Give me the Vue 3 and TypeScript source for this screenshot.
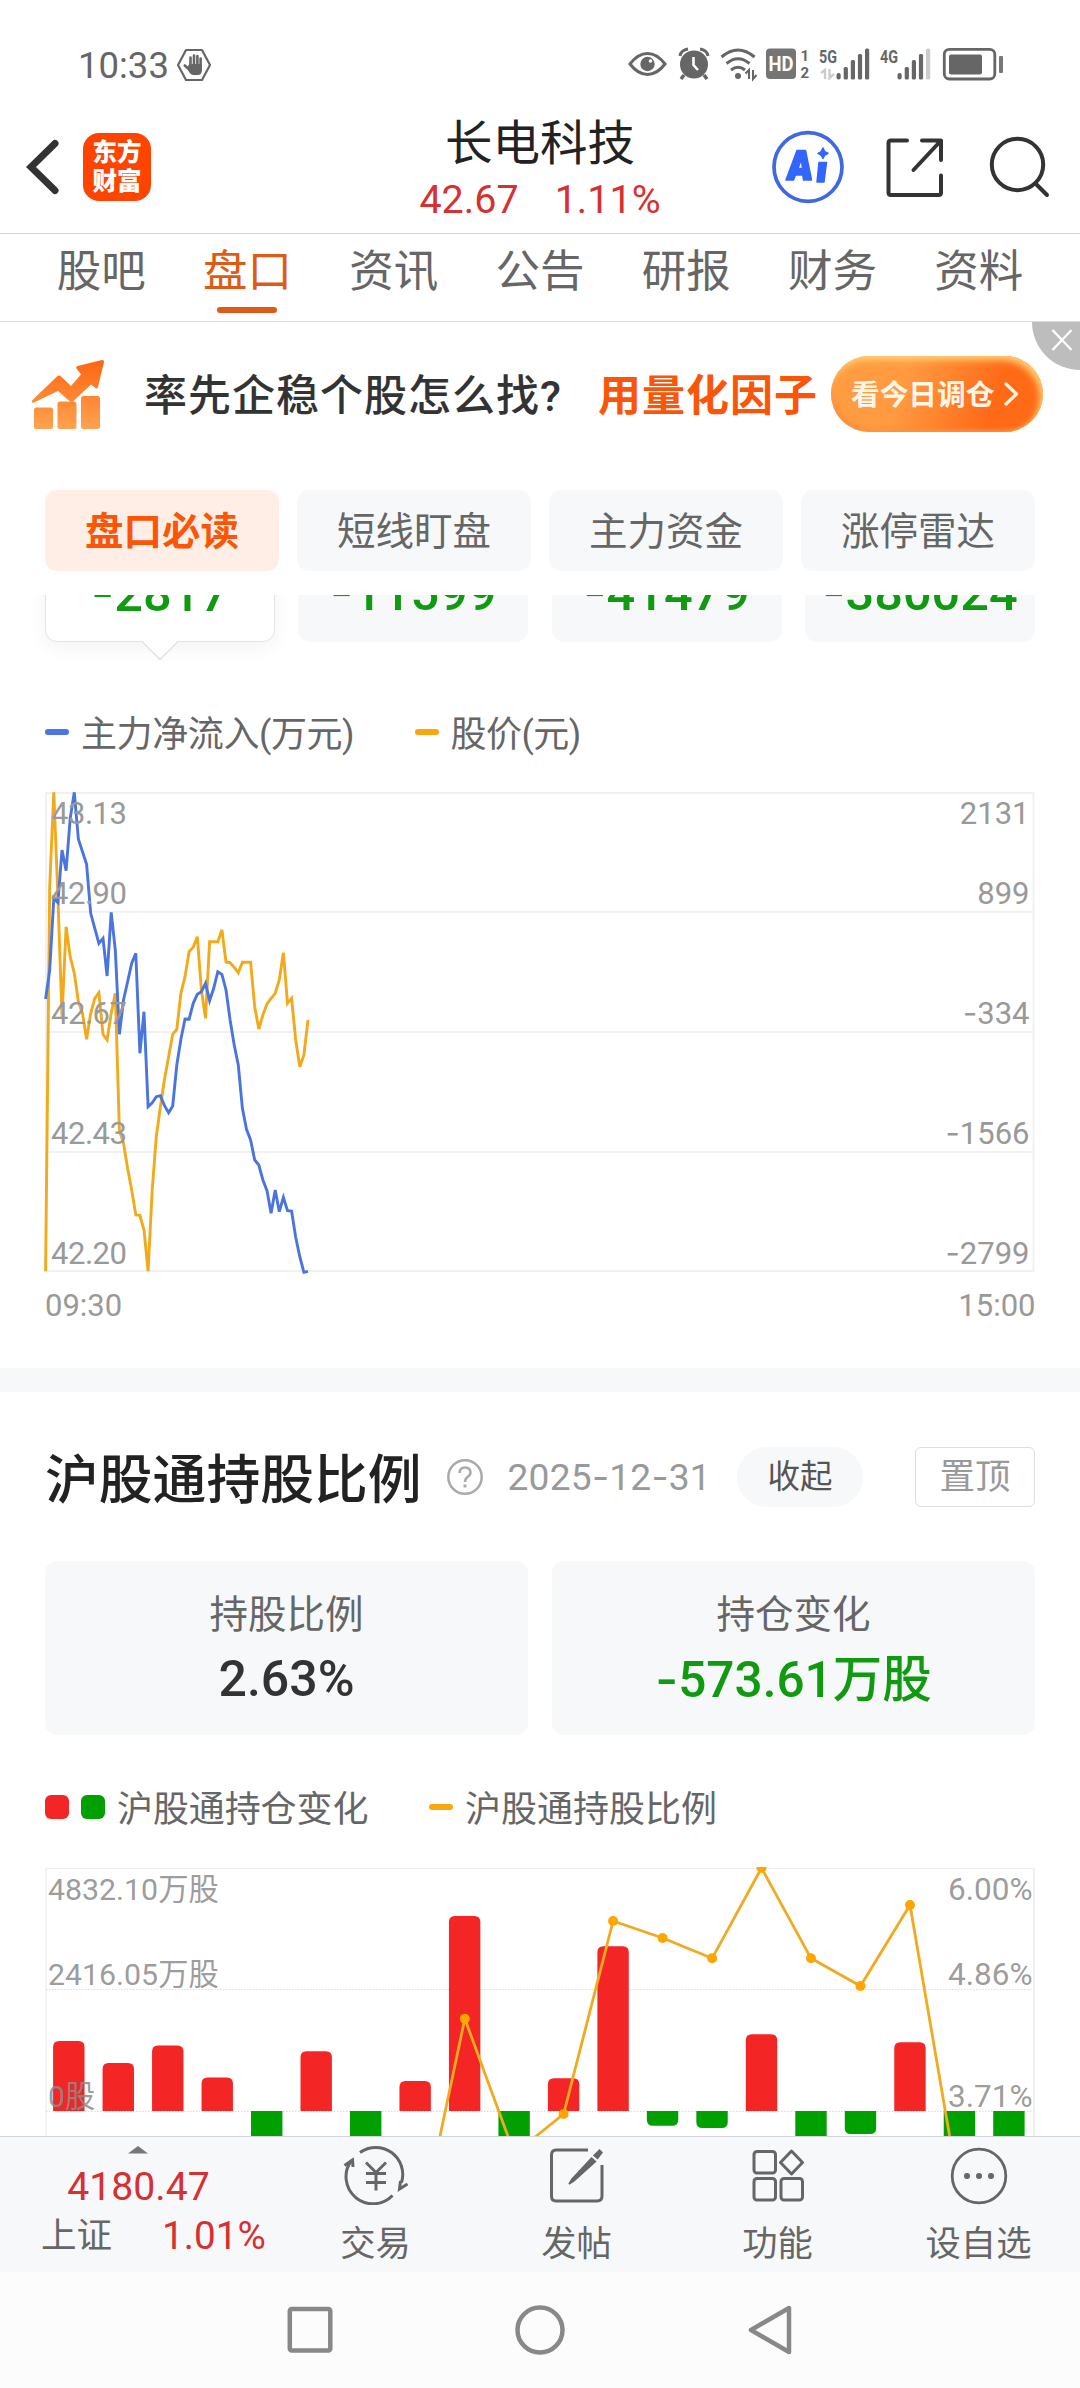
<script setup lang="ts">
interface NavItem {
  label: string
  icon: 'trade' | 'post' | 'apps' | 'more'
}

const tabs: string[] = ['股吧', '盘口', '资讯', '公告', '研报', '财务', '资料']
const activeTab = '盘口'

const chips: string[] = ['盘口必读', '短线盯盘', '主力资金', '涨停雷达']
const activeChip = '盘口必读'

const flows: string[] = ['2817', '11599', '41479', '380024']

const navItems: NavItem[] = [
  { label: '交易', icon: 'trade' },
  { label: '发帖', icon: 'post' },
  { label: '功能', icon: 'apps' },
  { label: '设自选', icon: 'more' },
]

// Minute samples since 09:30, in thirds of a pixel below the chart origin.
const inflow: number[] = [
  957, 870, 655, 668, 510, 572, 415, 337, 478, 515, 553, 700, 745, 790, 775, 888,
  697, 810, 1063, 960, 905, 850, 820, 1120, 995, 1280, 1268, 1250, 1247, 1277, 1298,
  1278, 1155, 1078, 1017, 1018, 970, 943, 935, 910, 962, 925, 875, 883, 930, 1020,
  1095, 1155, 1285, 1348, 1380, 1440, 1455, 1500, 1532, 1600, 1530, 1595, 1552, 1592,
  1593, 1672, 1730, 1777, 1774,
]
const price: number[] = [
  1774, 620, 337, 650, 1010, 740, 830, 880, 965, 1000, 1078, 1000, 955, 938, 1063,
  1080, 1000, 940, 1350, 1390, 1465, 1530, 1605, 1606, 1650, 1774, 1530, 1370, 1280,
  1198, 1130, 1063, 1048, 940, 890, 815, 802, 770, 930, 1015, 785, 785, 785, 750, 846,
  848, 862, 878, 847, 847, 847, 980, 1047, 1005, 972, 955, 940, 900, 818, 970, 955,
  1080, 1160, 1125, 1020,
]

function trace(samples: number[]): string {
  return samples
    .map((v, i) => `${(45.6 + i * 4.1).toFixed(1)},${(680 + v / 3).toFixed(1)}`)
    .join(' ')
}

const minuteLabels = [
  { y: 824, left: '43.13', neg: false, right: '2131' },
  { y: 904, left: '42.90', neg: false, right: '899' },
  { y: 1024, left: '42.67', neg: true, right: '334' },
  { y: 1144, left: '42.43', neg: true, right: '1566' },
  { y: 1264, left: '42.20', neg: true, right: '2799' },
]

// Bar end positions; values above the zero line are increases.
const zeroY = 2111
const ends: number[] = [
  2041, 2063, 2045.5, 2077.5, 2170, 2051.3, 2170, 2081, 1916, 2170,
  2078.3, 1946.3, 2125.7, 2128, 2034.3, 2170, 2134, 2042.3, 2170, 2170,
]

function barPath(end: number, i: number): string {
  const x = 53.1 + i * 49.48
  const w = 31.4
  const s = end < zeroY ? 1 : -1
  const r = 6
  return `M${x} ${zeroY}V${end + s * r}Q${x} ${end} ${x + r} ${end}H${x + w - r}Q${x + w} ${end} ${x + w} ${end + s * r}V${zeroY}Z`
}

const ratio: [number, number][] = [
  [415.3, 2253], [464.8, 2018.7], [514.4, 2153.8], [563.6, 2114], [613.1, 1921],
  [662.6, 1938], [712.1, 1958.3], [761.5, 1868], [811, 1958.3], [860.5, 1986],
  [910, 1905], [959.5, 2194],
]
const ratioPoints = ratio.map((p) => p.join(',')).join(' ')

const holdLabels = [
  { y: 1900, left: '4832.10万股', right: '6.00%' },
  { y: 1985, left: '2416.05万股', right: '4.86%' },
  { y: 2107, left: '0股', right: '3.71%' },
]
</script>

<template>
  <div class="screen">
    <div class="status">
      <span class="clock">10:33</span>
      <svg class="hand" width="36" height="34" viewBox="0 0 36 34" fill="none" stroke="#666">
        <path d="M10 2H26L34 17L26 32H10L2 17Z" stroke-width="2.2" stroke-linejoin="round" />
        <g stroke-width="2.6" stroke-linecap="round">
          <path d="M14.5 17V9.5M18 17V7.5M21.4 17V8M24.6 18V10.5M14 22L8.8 17.5" />
        </g>
        <path d="M13.2 16H26V22Q26 27 21.5 27H17.5Q14.5 27 12.5 23L11 20Z" fill="#666" stroke="none" />
      </svg>
      <svg class="status-icons" width="380" height="40" viewBox="625 44 380 40" fill="none" stroke="#666">
        <path d="M631 64Q639 53.500 648.500 53.500T666 64Q658 74.500 648.500 74.500T631 64Z" stroke-width="3" />
        <circle cx="648.500" cy="64" r="7.200" fill="#666" stroke="none" />
        <circle cx="651.500" cy="61" r="1.800" fill="#fff" stroke="none" />
        <circle cx="695" cy="64.500" r="14" fill="#666" stroke="none" />
        <path d="M681 56Q682 50 689 49M709 56Q708 50 701 49" stroke-width="3" />
        <path d="M685 75L682 79M705 75L708 79" stroke-width="3.500" />
        <path d="M694.500 57V65L699 70" stroke="#fff" stroke-width="2.600" />
        <path d="M722.500 57Q739 43 755.500 57M727.500 63.500Q739 54 750.500 63.500M732 70Q739 64.500 746 70" stroke-width="3" />
        <circle cx="739" cy="76" r="3" fill="#666" stroke="none" />
        <path d="M746.500 73.500L750 70V79M754 70V79L757.500 75" stroke-width="2" />
        <rect x="767" y="48.500" width="30" height="30.500" rx="4" fill="#757575" stroke="none" />
        <rect x="837.500" y="73" width="4.200" height="6.500" rx="2" fill="#666" stroke="none" />
        <rect x="844.700" y="67" width="4.200" height="12.500" rx="1.500" fill="#666" stroke="none" />
        <rect x="851.800" y="60" width="4.200" height="19.500" rx="1.500" fill="#666" stroke="none" />
        <rect x="858.900" y="54" width="4.200" height="25.500" rx="1.500" fill="#666" stroke="none" />
        <rect x="866" y="48.500" width="4.200" height="31" rx="1.500" fill="#666" stroke="none" />
        <path d="M822 73L826 70V79M830.500 69V78L835 74" stroke="#ccc" stroke-width="2.400" />
        <rect x="898.500" y="73" width="4.200" height="6.500" rx="2" fill="#666" stroke="none" />
        <rect x="905.700" y="67" width="4.200" height="12.500" rx="1.500" fill="#666" stroke="none" />
        <rect x="912.800" y="60" width="4.200" height="19.500" rx="1.500" fill="#666" stroke="none" />
        <rect x="919.900" y="54" width="4.200" height="25.500" rx="1.500" fill="#666" stroke="none" />
        <rect x="927" y="48.500" width="4.200" height="31" rx="1.500" fill="#ccc" stroke="none" />
        <rect x="945.300" y="49.300" width="50.500" height="29.700" rx="5" stroke-width="2.800" />
        <rect x="950" y="54.500" width="33" height="20" rx="2" fill="#666" stroke="none" />
        <rect x="1000" y="56" width="4" height="17" rx="1" fill="#777" stroke="none" />
        <g stroke="none" fill="#666" font-family="Roboto, sans-serif" font-weight="700">
          <text x="769.500" y="71" font-size="20" textLength="25" lengthAdjust="spacingAndGlyphs" style="fill: #fff">HD</text>
          <text x="801.500" y="61" font-size="15">1</text>
          <text x="801.500" y="78" font-size="15">2</text>
          <text x="820" y="62.500" font-size="18.500" textLength="18" lengthAdjust="spacingAndGlyphs">5G</text>
          <text x="881" y="62.500" font-size="18.500" textLength="18" lengthAdjust="spacingAndGlyphs">4G</text>
        </g>
      </svg>
    </div>

    <header class="header">
      <div class="side">
        <svg class="back" width="36" height="58" viewBox="0 0 36 58" fill="none" stroke="#333" stroke-width="7" stroke-linecap="round" stroke-linejoin="miter">
          <path d="M30 5.500L6 29L30 52.500" />
        </svg>
        <div class="logo"><span>东方</span><span>财富</span></div>
      </div>
      <div class="center">
        <div class="stock">长电科技</div>
        <div class="quote"><span>42.67</span><span>1.11%</span></div>
      </div>
      <div class="side right">
        <svg width="72" height="74" viewBox="0 0 72 74">
          <ellipse cx="36" cy="37" rx="34" ry="34.300" fill="none" stroke="#4068e4" stroke-width="3.700" />
          <g fill="#3366ff" stroke="#3366ff" stroke-width="1.500" stroke-linejoin="round">
            <path fill-rule="evenodd" d="M25 20.500H33.500L39.500 50H31.500L30.700 45H23.500L21.500 50H14ZM29.300 29L26 38.500H30.500Z" />
            <path d="M47 32.500H54.500L52 52H45Z" />
            <path d="M51 18L52.800 21.800L56 23.300L52.800 25L51 28.500L49 25L46 23.300L49 21.800Z" />
          </g>
        </svg>
        <svg class="share" width="60" height="60" viewBox="0 0 60 60" fill="none" stroke="#333" stroke-width="4" stroke-linecap="round" stroke-linejoin="round">
          <path d="M22 3.500H6Q3.500 3.500 3.500 6V55.500Q3.500 58 6 58H53.500Q56 58 56 55.500V38.500M37 3.500H56V23M56 3.500L28.500 33" />
        </svg>
        <svg width="62" height="62" viewBox="0 0 62 62" fill="none" stroke="#333" stroke-width="4" stroke-linecap="round">
          <circle cx="28.500" cy="28.500" r="25.700" />
          <path d="M46.500 47.500L58 59" />
        </svg>
      </div>
    </header>

    <nav class="tabs">
      <div v-for="t in tabs" :key="t" class="tab" :class="{ on: t === activeTab }"><span>{{ t }}</span></div>
    </nav>

    <section class="banner">
      <svg class="growth" width="74" height="72" viewBox="0 0 74 72">
        <defs>
          <linearGradient id="growth-fill" x1="0" y1="0" x2="0" y2="1" gradientUnits="userSpaceOnUse" gradientTransform="scale(72)">
            <stop offset="0" stop-color="#ff6410" />
            <stop offset="1" stop-color="#ffa552" />
          </linearGradient>
        </defs>
        <g fill="url(#growth-fill)">
          <path d="M1.500 41L26 17.500Q28 15.500 30 17.500L40 27L50 15.500L45.500 9.500Q44.500 8 46.500 7L71 1Q73 .5 73 3L67 28Q66 31 64.500 29L60 25.500L42 42.500Q40.500 44 39 42.500L27 32L3 43.500Q-.5 44.500 1.500 41Z" />
          <rect x="3" y="48.500" width="19" height="21.500" rx="2.500" />
          <rect x="26.500" y="42.500" width="19" height="27.500" rx="2.500" />
          <rect x="50" y="37" width="19" height="33" rx="2.500" />
        </g>
      </svg>
      <span class="ask">率先企稳个股怎么找?</span>
      <span class="factor">用量化因子</span>
      <div class="cta">
        <span>看今日调仓</span>
        <svg width="16" height="26" viewBox="0 0 16 26" fill="none" stroke="#fff3e4" stroke-width="3.200" stroke-linecap="round" stroke-linejoin="round">
          <path d="M3 3L13.500 13L3 23" />
        </svg>
      </div>
      <div class="close">
        <svg width="22" height="22" viewBox="0 0 22 22" stroke="#fff" stroke-width="2.400">
          <path d="M1.500 1L20.500 21M20.500 1L1.500 21" />
        </svg>
      </div>
    </section>

    <div class="chips">
      <div v-for="c in chips" :key="c" class="chip" :class="{ on: c === activeChip }">{{ c }}</div>
    </div>

    <div class="flows">
      <div v-for="(f, i) in flows" :key="f" class="flow" :class="{ on: i === 0 }">
        <span><i>-</i>{{ f }}</span>
        <svg v-if="i === 0" class="pointer" width="40" height="22" viewBox="0 0 40 22">
          <path d="M1 0L20 19.500L39 0" fill="#fff" />
          <path d="M1.500 1L20 19.500L38.500 1" fill="none" stroke="#e2e2e2" stroke-width="1.300" />
        </svg>
      </div>
    </div>

    <div class="legend first">
      <b class="dash blue"></b><span class="inflow">主力净流入(万元)</span>
      <b class="dash amber"></b><span class="quoted">股价(元)</span>
    </div>

    <svg class="minute" width="1080" height="578" viewBox="0 790 1080 578">
      <g stroke="#f1f1f1" stroke-width="2" fill="none">
        <path d="M46 793H1034.500M46 911.700H1034.500M46 1032H1034.500M46 1152H1034.500M46 1271H1034.500M46 792V1272M1033.500 792V1272" />
      </g>
      <g fill="none" stroke-width="2.900" stroke-linejoin="miter">
        <polyline :points="trace(price)" stroke="#f2aa1c" />
        <polyline :points="trace(inflow)" stroke="#4a74e0" />
      </g>
      <g class="axis">
        <template v-for="l in minuteLabels" :key="l.y">
          <text x="51" :y="l.y" textLength="76">{{ l.left }}</text>
          <text x="1029.500" :y="l.y" text-anchor="end"><tspan v-if="l.neg" class="minus">-</tspan>{{ l.right }}</text>
        </template>
        <text x="45" y="1315.700">09:30</text>
        <text x="1035.500" y="1315.700" text-anchor="end">15:00</text>
      </g>
    </svg>

    <div class="band"></div>

    <div class="title-row">
      <h2>沪股通持股比例</h2>
      <svg class="help" width="38" height="38" viewBox="0 0 38 38" fill="none" stroke="#aaa" stroke-width="2.500">
        <circle cx="19" cy="19" r="16.700" />
        <path d="M13.500 15Q13.700 9.500 19 9.500T24.500 14.500Q24.500 17 21.500 19Q19 20.700 19 24" />
        <path d="M19 26.500V29.500" stroke-width="3" />
      </svg>
      <span class="date">2025<i>-</i>12<i>-</i>31</span>
      <span class="fold">收起</span>
      <span class="pin">置顶</span>
    </div>

    <div class="stats">
      <div class="stat"><span class="name">持股比例</span><span class="num">2.63%</span></div>
      <div class="stat"><span class="name">持仓变化</span><span class="num down"><i>-</i>573.61万股</span></div>
    </div>

    <div class="legend second">
      <b class="sq red"></b><b class="sq green"></b><span class="change">沪股通持仓变化</span>
      <b class="dash amber"></b><span>沪股通持股比例</span>
    </div>

    <svg class="hold" width="1080" height="269" viewBox="0 1867 1080 269">
      <g fill="none">
        <path d="M45.500 1868.500H1034.500M46 1868V2140" stroke="#eee" stroke-width="1.200" />
        <path d="M1034 1868V2140" stroke="#f0f0f0" stroke-width="2" />
        <path d="M46 1989.500H1034M46 2111.300H1034" stroke="#ddd" stroke-width="1.200" stroke-dasharray="1.500 1.500" />
      </g>
      <path v-for="(e, i) in ends" :key="i" :d="barPath(e, i)" :fill="e < zeroY ? '#f42525' : '#00a000'" />
      <polyline :points="ratioPoints" fill="none" stroke="#f0aa20" stroke-width="2.800" />
      <circle v-for="p in ratio" :key="p[0]" :cx="p[0]" :cy="p[1]" r="5" fill="#ffa500" />
      <g class="axis hold-axis">
        <template v-for="l in holdLabels" :key="l.y">
          <text x="48" :y="l.y">{{ l.left }}</text>
          <text class="percent" x="1032.500" :y="l.y" text-anchor="end">{{ l.right }}</text>
        </template>
      </g>
    </svg>

    <footer class="nav">
      <div class="index">
        <svg width="20" height="8" viewBox="0 0 20 8"><path d="M0 7.500L10 0L20 7.500Z" fill="#777" /></svg>
        <span class="point">4180.47</span>
        <div class="line"><span>上证</span><span class="pct">1.01%</span></div>
      </div>
      <div v-for="n in navItems" :key="n.label" class="item">
        <svg v-if="n.icon === 'trade'" width="66" height="60" viewBox="0 0 66 60" fill="none" stroke="#666" stroke-width="3">
          <path d="M17 7.500A27 27 0 0 1 58.500 37.500M49.500 50.500A27 27 0 0 1 8.500 15.500" />
          <path d="M1.500 20.500L9.500 15L10 22M64.500 39L56.500 44L57.500 36" />
          <path d="M23 17.500L33 27.500L43 17.500M33 27V45.500M23 28.500H43M23 37.500H43" />
        </svg>
        <svg v-else-if="n.icon === 'post'" width="66" height="60" viewBox="0 0 66 60" fill="none" stroke="#666" stroke-width="3">
          <path d="M44 5H12Q7.500 5 7.500 10V51Q7.500 56 12 56H53Q58 56 58 51V20" />
          <path d="M28 34L47.500 13L51.500 16.500L30 36L25 39ZM50 10.500L55.500 5L58 7.500L53.500 13.500Z" fill="#666" stroke-width="1.500" />
        </svg>
        <svg v-else-if="n.icon === 'apps'" width="66" height="60" viewBox="0 0 66 60" fill="none" stroke="#666" stroke-width="3" stroke-linejoin="round">
          <rect x="9" y="6.500" width="21.500" height="21.500" rx="3" />
          <path d="M46.500 6L57.500 17.500L46.500 29L35.500 17.500Z" />
          <rect x="9" y="33.500" width="21.500" height="21.500" rx="3" />
          <rect x="36" y="33.500" width="21.500" height="21.500" rx="3" />
        </svg>
        <svg v-else width="66" height="60" viewBox="0 0 66 60" fill="none" stroke="#666" stroke-width="2.800">
          <circle cx="33" cy="31" r="26.800" />
          <g fill="#666" stroke="none"><circle cx="21" cy="31" r="3" /><circle cx="33" cy="31" r="3" /><circle cx="45" cy="31" r="3" /></g>
        </svg>
        <span>{{ n.label }}</span>
      </div>
    </footer>

    <div class="system">
      <svg width="50" height="54" viewBox="0 0 50 54" fill="none" stroke="#888" stroke-width="4.500"><rect x="4.800" y="6" width="40.500" height="41.500" rx="2" /></svg>
      <svg width="54" height="54" viewBox="0 0 54 54" fill="none" stroke="#888" stroke-width="4.500"><circle cx="27" cy="27" r="22.500" /></svg>
      <svg width="50" height="54" viewBox="0 0 50 54" fill="none" stroke="#888" stroke-width="4.500" stroke-linejoin="round"><path d="M44 5V49L6 27Z" /></svg>
    </div>
  </div>
</template>

<style>
body {
  margin: 0;
  background: #fff;
}
</style>

<style scoped>
.screen {
  width: 1080px;
  height: 2388px;
  overflow: hidden;
  display: flex;
  flex-direction: column;
  background: #fff;
  color: #666;
  font-family: Roboto, 'Noto Sans CJK SC', sans-serif;
}
.screen > * {
  flex: none;
  box-sizing: border-box;
}
svg {
  display: block;
  flex: none;
}
i {
  font-style: normal;
  font-family: Inter, sans-serif;
}
.status {
  height: 100px;
  display: flex;
  align-items: center;
  padding: 31px 76px 0 78px;
}
.clock {
  font-size: 36.500px;
  line-height: 40px;
  width: 98px;
}
.hand {
  margin-top: -2px;
}
.status-icons {
  margin-left: auto;
  margin-top: -3px;
}
.header {
  height: 134px;
  border-bottom: 1.500px solid #d6d6d6;
  display: flex;
  justify-content: space-between;
  align-items: center;
}
.side {
  width: 330px;
  display: flex;
  align-items: center;
  padding-left: 25px;
  box-sizing: border-box;
}
.logo {
  margin-left: 22px;
  width: 68px;
  height: 68px;
  border-radius: 16px;
  background: #ff4400;
  color: #fff;
  display: flex;
  flex-direction: column;
  align-items: center;
  justify-content: center;
  font-size: 24.500px;
  font-weight: 900;
  line-height: 29px;
}
.center {
  text-align: center;
  padding-top: 10px;
}
.stock {
  font-size: 47.500px;
  line-height: 56px;
  color: #222;
}
.quote {
  display: flex;
  gap: 36px;
  font-size: 39.500px;
  line-height: 56px;
  color: #d63030;
}
.side.right {
  padding: 0 29px 0 0;
  justify-content: flex-end;
}
.side.right .share {
  margin: 0 44px 0 41px;
}
.tabs {
  height: 88px;
  padding: 0 28px;
  display: flex;
  border-bottom: 1.500px solid #d9d9d9;
}
.tab {
  flex: 1;
  display: flex;
  flex-direction: column;
  align-items: center;
  font-size: 44.500px;
  line-height: 76px;
}
.tab.on {
  color: #dd5b14;
}
.tab.on::after {
  content: '';
  width: 60px;
  height: 6px;
  border-radius: 3px;
  background: #dd5b14;
  margin-top: -3px;
}
.banner {
  position: relative;
  height: 144px;
  padding-left: 31px;
  display: flex;
  align-items: center;
}
.growth {
  margin-top: 2px;
}
.ask {
  margin: -5px 0 0 39px;
  width: 454px;
  white-space: nowrap;
  font-size: 43px;
  letter-spacing: 1px;
  font-weight: 500;
  color: #333;
}
.factor {
  margin-top: -5px;
  white-space: nowrap;
  width: 233px;
  font-size: 43px;
  letter-spacing: 1px;
  font-weight: 700;
  color: #fb5607;
}
.cta {
  width: 212px;
  height: 76px;
  box-sizing: border-box;
  border-radius: 38px;
  padding-left: 20px;
  display: flex;
  align-items: center;
  gap: 9px;
  background: linear-gradient(110deg, #ff9d42 0%, #ff9a40 35%, #ff6a18 75%, #ff6a14 100%);
  box-shadow: inset -3px 4px 7px #ffd075, inset 2px -2px 4px #ff8a3c;
  font-size: 28.700px;
  font-weight: 700;
  color: #fff6ea;
  white-space: nowrap;
}
.cta span {
  margin-top: -3px;
}
.close {
  position: absolute;
  top: 0;
  right: 0;
  width: 48px;
  height: 48px;
  box-sizing: border-box;
  padding: 7px 0 0 19px;
  background: #bdbdbd;
  border-bottom-left-radius: 48px;
}
.chips {
  height: 129px;
  padding: 24px 45px;
  display: flex;
  gap: 18px;
}
.chip {
  flex: 1;
  height: 81px;
  border-radius: 12px;
  background: #f7f8fa;
  text-align: center;
  font-size: 38.500px;
  line-height: 84px;
}
.chip.on {
  background: #ffeee6;
  color: #fb5607;
  font-weight: 700;
}
.flows {
  height: 86px;
  padding: 0 45px;
  display: flex;
  justify-content: space-between;
  overflow: hidden;
}
.flow {
  position: relative;
  width: 230px;
  height: 167px;
  margin-top: -120px;
  box-sizing: border-box;
  border-radius: 12px;
  background: #f7f8fa;
  display: flex;
  justify-content: center;
  align-items: flex-end;
  padding-bottom: 14px;
  font-size: 50.500px;
  font-weight: 500;
  line-height: 70px;
  color: #109a10;
}
.flow.on {
  background: #fff;
  border: 1.500px solid #e4e4e4;
  padding-bottom: 12.500px;
  box-shadow: 0 6px 20px rgba(0, 0, 0, 0.05);
}
.flow i {
  font-weight: 400;
}
.pointer {
  position: absolute;
  left: 94px;
  bottom: -21px;
}
.legend {
  display: flex;
  align-items: center;
  padding: 0 45px;
  font-size: 36px;
  white-space: nowrap;
}
.legend.first {
  height: 109px;
  padding-bottom: 7px;
}
.legend.second {
  height: 132px;
  padding-top: 11px;
}
.legend span {
  margin-top: -2px;
}
.dash {
  width: 24px;
  height: 6px;
  border-radius: 3px;
  margin-right: 12px;
}
.blue {
  background: #4a74e8;
}
.amber {
  background: #fba60e;
}
.inflow {
  width: 333.500px;
  letter-spacing: -0.400px;
}
.quoted {
  letter-spacing: -0.500px;
}
.sq {
  width: 24px;
  height: 24px;
  border-radius: 6px;
  margin-right: 12px;
}
.red {
  background: #f42525;
}
.green {
  background: #00a000;
}
.change {
  width: 312px;
  letter-spacing: -0.100px;
}
.axis {
  fill: #999;
  font-size: 31px;
}
.minus {
  font-family: Inter, sans-serif;
}
.hold-axis {
  font-size: 30.300px;
  fill: rgba(140, 140, 140, 0.87);
}
.percent {
  font-size: 31.500px;
}
.band {
  height: 24px;
  background: #f7f8fa;
}
.title-row {
  height: 169px;
  padding: 0 45px;
  display: flex;
  align-items: center;
  white-space: nowrap;
}
.title-row h2 {
  margin: -3px 0 0;
  width: 401px;
  font-size: 53.800px;
  font-weight: 500;
  color: #222;
}
.date {
  margin-left: 23.500px;
  width: 229.500px;
  font-size: 37.200px;
  letter-spacing: 0.200px;
  color: #999;
}
.fold {
  width: 126px;
  height: 60px;
  border-radius: 30px;
  background: #f7f8fa;
  text-align: center;
  font-size: 32.500px;
  line-height: 61px;
  color: #555;
}
.pin {
  margin-left: auto;
  width: 120px;
  height: 60px;
  box-sizing: border-box;
  border: 1.500px solid #dfdfdf;
  border-radius: 6px;
  text-align: center;
  font-size: 35.500px;
  line-height: 59px;
  color: #999;
}
.stats {
  height: 174px;
  padding: 0 45px;
  display: flex;
  gap: 24px;
}
.stat {
  flex: 1;
  border-radius: 12px;
  background: #f7f8fa;
  display: flex;
  flex-direction: column;
  align-items: center;
}
.name {
  margin-top: 25px;
  font-size: 38.500px;
  line-height: 58px;
}
.num {
  font-size: 50px;
  font-weight: 500;
  line-height: 70px;
  color: #333;
}
.num.down {
  font-size: 49.500px;
  color: #109a10;
}
.nav {
  height: 136px;
  border-top: 1.500px solid #d0d7dc;
  background: #f7f8fa;
  display: flex;
}
.index {
  width: 275px;
  display: flex;
  flex-direction: column;
  align-items: center;
  padding-top: 9px;
}
.point {
  font-size: 39.200px;
  line-height: 50px;
  margin: 8px 0 0 2px;
  color: #d63030;
}
.line {
  align-self: stretch;
  padding-left: 41px;
  display: flex;
  font-size: 35.500px;
  line-height: 48px;
}
.pct {
  margin-left: 50px;
  font-size: 38.700px;
  color: #d63030;
}
.item {
  width: 201px;
  display: flex;
  flex-direction: column;
  align-items: center;
  padding-top: 8px;
  font-size: 35.300px;
  line-height: 50px;
  white-space: nowrap;
}
.item span {
  margin-top: 14px;
}
.system {
  height: 116px;
  background: #fcfcfc;
  display: flex;
  align-items: center;
  justify-content: center;
  gap: 178px;
}
</style>
